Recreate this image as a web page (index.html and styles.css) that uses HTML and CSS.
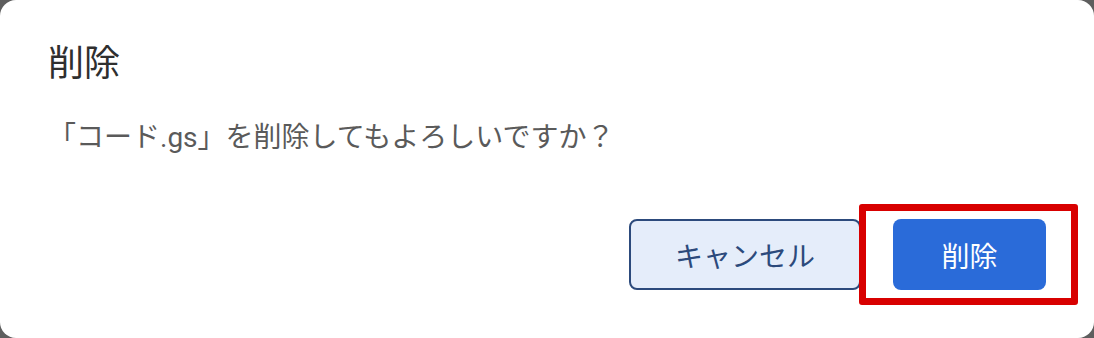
FILE: index.html
```html
<!DOCTYPE html>
<html lang="ja">
<head>
<meta charset="utf-8">
<title>削除</title>
<link rel="stylesheet" href="styles.css">
</head>
<body>
<div class="dialog">
  <h1 class="dialog-title">削除</h1>
  <p class="dialog-message">「コード.gs」を削除してもよろしいですか？</p>
  <div class="dialog-actions">
    <button class="btn btn-cancel">キャンセル</button>
    <div class="highlight-wrap">
      <button class="btn btn-delete">削除</button>
      <span class="highlight"></span>
    </div>
  </div>
</div>
</body>
</html>
```
FILE: styles.css
```css
html, body {
  margin: 0;
  padding: 0;
  background: #5e5e5e;
}
body {
  width: 1094px;
  height: 338px;
  font-family: Roboto, "Noto Sans CJK JP", sans-serif;
}
.dialog {
  box-sizing: border-box;
  width: 1094px;
  height: 338px;
  background: #ffffff;
  border-radius: 16px;
  padding: 43px 48px 48px 48px;
  display: flex;
  flex-direction: column;
}
.dialog-title {
  margin: 0;
  font-size: 36px;
  font-weight: 400;
  line-height: 42px;
  color: #2f2f2f;
}
.dialog-message {
  margin: 35px 0 0 0;
  font-size: 28px;
  line-height: 36px;
  color: #5a5a5a;
}
.dialog-actions {
  margin-top: auto;
  display: flex;
  justify-content: flex-end;
  gap: 32px;
}
.btn {
  box-sizing: border-box;
  height: 71px;
  border-radius: 8px;
  font-family: Roboto, "Noto Sans CJK JP", sans-serif;
  font-size: 28px;
  padding: 0;
  cursor: pointer;
}
.btn-cancel {
  width: 232px;
  background: #e5edfa;
  border: 2px solid #2c4a7c;
  color: #2c4a7c;
}
.btn-delete {
  width: 153px;
  background: #2a6bd9;
  border: none;
  color: #ffffff;
}
.highlight-wrap {
  position: relative;
  display: flex;
}
.highlight {
  position: absolute;
  top: -15px;
  bottom: -15px;
  left: -34px;
  right: -32px;
  border: 7px solid #d80000;
  border-radius: 3px;
}
```
